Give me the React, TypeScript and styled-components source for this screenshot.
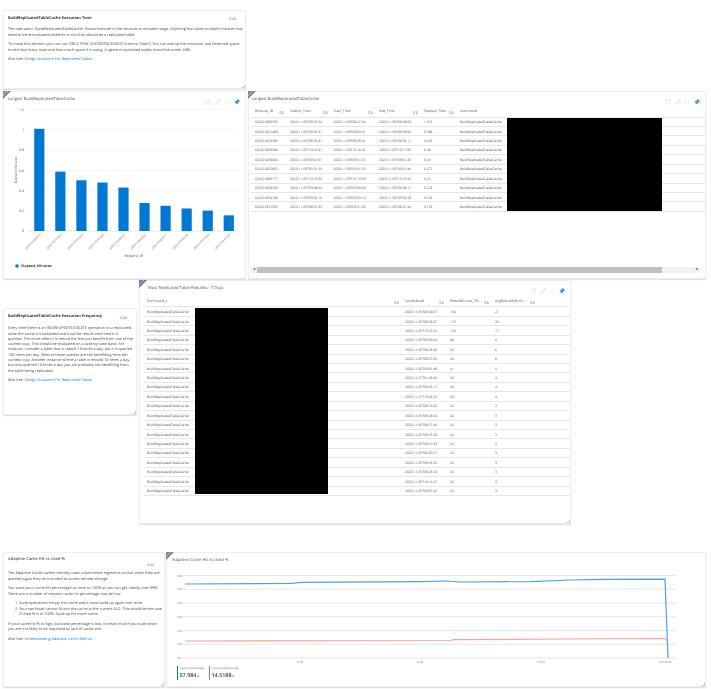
import React from 'react'
import styled, { createGlobalStyle } from 'styled-components'
import { Code, Pencil, Pin, RotateCw } from 'lucide-react'

const GlobalStyle = createGlobalStyle`
  html, body {
    margin: 0;
    background: #fff;
    font-family: "Open Sans", "Liberation Sans", sans-serif;
    text-rendering: geometricPrecision;
  }
`

const longestRows = [
  ['QID474380593', '2020-11-09T08:47:54', '2020-11-09T08:47:54', '2020-11-09T08:48:53', '1.012'],
  ['QID474291483', '2020-11-09T08:02:31', '2020-11-09T08:02:31', '2020-11-09T08:03:06', '0.588'],
  ['QID474253385', '2020-11-09T08:35:41', '2020-11-09T08:35:41', '2020-11-09T08:36:11', '0.502'],
  ['QID474390366', '2020-11-09T10:16:31', '2020-11-09T10:16:31', '2020-11-09T10:17:00', '0.48'],
  ['QID474258645', '2020-11-09T08:51:07', '2020-11-09T08:51:07', '2020-11-09T08:51:33', '0.43'],
  ['QID474352852', '2020-11-09T09:01:29', '2020-11-09T09:01:29', '2020-11-09T09:01:46', '0.277'],
  ['QID474389777', '2020-11-09T10:13:30', '2020-11-09T10:13:30', '2020-11-09T10:13:45', '0.25'],
  ['QID474358238', '2020-11-09T09:08:04', '2020-11-09T09:08:04', '2020-11-09T09:08:17', '0.223'],
  ['QID474354188', '2020-11-09T09:02:16', '2020-11-09T09:02:16', '2020-11-09T09:02:28', '0.202'],
  ['QID474331935', '2020-11-09T08:31:35', '2020-11-09T08:31:35', '2020-11-09T08:31:44', '0.155'],
]

const rebuildRows = [
  ['2020-11-09T08:32:07', '192', '27'],
  ['2020-11-09T08:32:07', '179', '25'],
  ['2020-11-09T10:16:32', '123', '17'],
  ['2020-11-09T08:30:54', '48', '6'],
  ['2020-11-09T08:28:48', '43', '6'],
  ['2020-11-09T08:27:05', '43', '6'],
  ['2020-11-09T08:01:48', '41', '5'],
  ['2020-11-07T01:49:00', '34', '4'],
  ['2020-11-09T08:55:17', '28', '4'],
  ['2020-11-07T10:54:53', '28', '4'],
  ['2020-11-09T08:13:05', '24', '3'],
  ['2020-11-09T08:23:04', '24', '3'],
  ['2020-11-09T08:17:45', '24', '3'],
  ['2020-11-09T08:15:28', '24', '3'],
  ['2020-11-09T08:10:33', '24', '3'],
  ['2020-11-09T08:20:57', '24', '3'],
  ['2020-11-09T08:18:59', '24', '3'],
  ['2020-11-09T08:23:43', '24', '3'],
  ['2020-11-09T18:16:27', '24', '3'],
  ['2020-11-09T08:07:42', '22', '3'],
]

const bars = [1.012, 0.588, 0.502, 0.48, 0.43, 0.277, 0.25, 0.223, 0.202, 0.155]

const longestCols = '35px 43.5px 45.5px 45px 36px 245.5px'
const rebuildCols = '258px 45px 45px 46px'

const PanelTools = () => (
  <Tools>
    <RotateCw size={6} strokeWidth={1.4} />
    <Pencil size={6} strokeWidth={1.6} />
    <Code size={6} strokeWidth={1.6} />
    <PinIcon size={6} strokeWidth={1.6} />
  </Tools>
)

const Corner = ({ tint = '#7f7f7f' }: { tint?: string }) => (
  <CornerMark viewBox="0 0 8 8">
    <polygon points="0,0 8,0 0,8" fill={tint} />
    <line x1="5" y1="0" x2="0" y2="5" stroke="#fff" strokeWidth="0.5" />
    <line x1="2.6" y1="0" x2="0" y2="2.6" stroke="#ddd" strokeWidth="0.4" />
  </CornerMark>
)

const Handle = () => (
  <ResizeMark viewBox="0 0 4 4">
    <path d="M0.5 3.6H3.6V0.5" fill="none" stroke="#b5b5b5" strokeWidth="0.8" />
  </ResizeMark>
)

const SortArrows = () => (
  <SortIcon viewBox="0 0 6 4">
    <path d="M1.5 4V0.5M0.5 1.5L1.5 0.5L2.5 1.5M4.5 0V3.5M3.5 2.5L4.5 3.5L5.5 2.5" fill="none" stroke="#555" strokeWidth="0.5" />
  </SortIcon>
)

const ElapsedChart = () => (
  <ChartSvg width="243" height="175" viewBox="3 104 243 175" $top={2.3}>
    {[0, 0.2, 0.4, 0.6, 0.8, 1, 1.2].map((v) => (
      <g key={v}>
        <line x1="27" x2="238" y1={231 - v * 101} y2={231 - v * 101} stroke={v === 0 ? '#dcdcdc' : '#f1f1f1'} strokeWidth="0.7" />
        <text x="23" y={232.2 - v * 101} fontSize="3.6" fill="#666" textAnchor="end">{v}</text>
      </g>
    ))}
    {bars.map((v, i) => (
      <rect key={i} x={33.2 + i * 21.05} y={231 - v * 101} width="10.2" height={v * 101} fill="#0078d4" />
    ))}
    {longestRows.map((r, i) => (
      <text key={r[0]} fontSize="3" fill="#777" textAnchor="end" transform={`translate(${40 + i * 21.05} 235) rotate(-45)`}>
        {r[0]}
      </text>
    ))}
    <text x="133" y="257" fontSize="3.6" fill="#555" textAnchor="middle">Request_ID</text>
    <text fontSize="3.4" fill="#555" textAnchor="middle" transform="translate(16 170) rotate(-90)">Elapsed_Minutes</text>
    <circle cx="16" cy="266" r="1.8" fill="#0078d4" />
    <text x="20" y="267.3" fontSize="3.7" fontWeight="700" fill="#444">Elapsed_Minutes</text>
  </ChartSvg>
)

const CacheChart = () => (
  <ChartSvg width="540" height="103" viewBox="166 563 540 103">
    {[0, 10, 20, 30, 40, 50, 60].map((v) => (
      <g key={v}>
        <line x1="182" x2="675" y1={658 - v * 1.375} y2={658 - v * 1.375} stroke="#e6e6e6" strokeWidth="1" />
        <text x="176" y={659 - v * 1.375} fontSize="2.9" fill="#888">{v}%</text>
      </g>
    ))}
    <polyline
      points="184,584 290,583.4 300,582.4 420,581.6 445,581 460,582 530,581.6 570,580 600,579.3 664,579.2 667,658"
      fill="none"
      stroke="#4fa2e2"
      strokeWidth="1.2"
    />
    <polyline
      points="184,641 450,640.5 452,639.6 560,639 664,638.5 665.5,640"
      fill="none"
      stroke="#f4a493"
      strokeWidth="1.2"
    />
    <text x="299" y="663" fontSize="2.8" fill="#888" textAnchor="middle">5 AM</text>
    <text x="419" y="663" fontSize="2.8" fill="#888" textAnchor="middle">9 AM</text>
    <text x="540" y="663" fontSize="2.8" fill="#888" textAnchor="middle">10 AM</text>
    <text x="664" y="663" fontSize="2.8" fill="#888" textAnchor="middle">UTC 06:00</text>
  </ChartSvg>
)

export default function App() {
  return (
    <Page>
      <GlobalStyle />
      <TopRow>
        <LeftColumn>
          <NotePanel $width={243} $height={79}>
            <NoteHeader>
              <NoteTitle>BuildReplicatedTableCache Execution Time</NoteTitle>
              <EditLink $drop={1}>Edit</EditLink>
            </NoteHeader>
            <Para>
              The operation: 'BuildReplicatedTableCache' Should execute in the seconds to minutes range. Anything that
              takes multiple minutes may
              <br />
              need to be re-evaluated whether or not that should be a replicated table.
            </Para>
            <Para>
              To make this decision you can run: DBCC PDW_SHOWSPACEUSED('Schema.Table'); You can add up the rowcount and
              Reserved space
              <br />
              to see how many rows and how much space it is using. In general replicated tables should be under 2GB.
            </Para>
            <Para>
              Also See: <DocLink>Design Guidance For Replicated Tables</DocLink>
            </Para>
            <Handle />
          </NotePanel>
          <ChartPanel $width={243} $height={188}>
            <Corner />
            <PanelTitle $indent={3.7}>Longest BuildReplicatedTableCache</PanelTitle>
            <PanelTools />
            <ElapsedChart />
          </ChartPanel>
        </LeftColumn>
        <TablePanel $width={458} $height={188} $inset={2}>
          <Corner />
          <PanelTitle $indent={0.7}>Longest BuildReplicatedTableCache</PanelTitle>
          <PanelTools />
          <HeaderRow $cols={longestCols} $gap={5.9}>
            {['Request_ID', 'Submit_Time', 'Start_Time', 'End_Time', 'Elapsed_Time'].map((h) => (
              <HeaderCell key={h}>
                {h}
                <SortArrows />
              </HeaderCell>
            ))}
            <HeaderCell>Command</HeaderCell>
          </HeaderRow>
          <RowStack>
            {longestRows.map((r) => (
              <Row key={r[0]} $cols={longestCols}>
                {r.map((c, i) => (
                  <Cell key={i}>{c}</Cell>
                ))}
                <Cell>BuildReplicatedTableCache</Cell>
              </Row>
            ))}
            <Redaction $left={255.7} $top={0.7} $width={155} $height={93} />
          </RowStack>
          <ScrollTrack>
            <ScrollArrow>◂</ScrollArrow>
            <ScrollThumb />
            <ScrollArrow>▸</ScrollArrow>
          </ScrollTrack>
        </TablePanel>
      </TopRow>

      <MiddleRow>
        <NotePanel $width={134} $height={107} $top={28}>
          <NoteHeader>
            <NoteTitle>BuildReplicatedTableCache Execution Frequency</NoteTitle>
            <EditLink $drop={2}>Edit</EditLink>
          </NoteHeader>
          <Para>
            Every time there is an INSER/UPDATE/DELETE operation to a replicated
            <br />
            table the cache is invalidated and it will be rebuilt next time it is
            <br />
            queried. The more often it is rebuilt the less you benefit from use of the
            <br />
            cached copy. This should be evaluated on a case-by-case basis. For
            <br />
            instance, consider a table that is rebuilt 10 times a day, but it is queried
            <br />
            100 times per day. Most of those queries are still benefiting from teh
            <br />
            cached copy. Another instance where a table is rebuild 10 times a day,
            <br />
            but only queried 10 times a day you are probably not benefiting from
            <br />
            the table being replicated.
          </Para>
          <Para>
            Also See: <DocLink>Design Guidance For Replicated Tables</DocLink>
          </Para>
          <Handle />
        </NotePanel>
        <TablePanel $width={432} $height={244} $inset={3}>
          <Corner tint="#84689a" />
          <PanelTitle $indent={5}>Most Replicated Table Rebuilds - 7 Days</PanelTitle>
          <PanelTools />
          <HeaderRow $cols={rebuildCols}>
            {['Command_s', 'LastRebuild', 'RebuildCount_7D...', 'AvgRebuildsPerD...'].map((h) => (
              <HeaderCell key={h}>
                {h}
                <SortArrows />
              </HeaderCell>
            ))}
          </HeaderRow>
          <RowStack>
            {rebuildRows.map((r, n) => (
              <Row key={n} $cols={rebuildCols}>
                <Cell>BuildReplicatedTableCache</Cell>
                {r.map((c, i) => (
                  <Cell key={i}>{c}</Cell>
                ))}
              </Row>
            ))}
            <Redaction $left={52} $top={0.5} $width={132.5} $height={186} />
          </RowStack>
          <Handle />
        </TablePanel>
      </MiddleRow>

      <BottomRow>
        <CacheNote $width={162} $height={135}>
          <PlainTitle>Adaptive Cache Hit vs Used %</PlainTitle>
          <EditRow>
            <EditLink>Edit</EditLink>
          </EditRow>
          <Para>
            The Adaptive Cache caches recently used columnstore segments so that when they are
            <br />
            queried again they do not need to access remote storage.
          </Para>
          <Para>
            You want your Cache Hit percentage as close to 100% as you can get. Ideally over 99%.
            <br />
            There are a number of reasons cache hit percentage may be low.
          </Para>
          <Steps>
            <li>Scale operations empty the cache and it must build up again over time</li>
            <li>
              Your workload cannot fit into the cache at the current SLO. This would be the case
              <br />
              if Used % is at 100%. Scale up for more cache.
            </li>
          </Steps>
          <Para>
            If your cache hit % is high, but used percentage is low, it means that if you scale down
            <br />
            you are not likely to be impacted by lack of cache size.
          </Para>
          <Para>
            Also See: <DocLink>Understanding Adaptive Cache Metrics</DocLink>
          </Para>
          <Handle />
        </CacheNote>
        <ChartPanel $width={540} $height={135}>
          <Corner />
          <PanelTitle $indent={5}>Adaptive Cache Hit vs Used %</PanelTitle>
          <CacheChart />
          <Legend>
            <LegendItem $color="#0078d4">
              <LegendLabel>Cache hit percentag...</LegendLabel>
              <LegendValue>
                57.984<small>%</small>
              </LegendValue>
            </LegendItem>
            <LegendItem $color="#ee6a55">
              <LegendLabel>Cache used percentag...</LegendLabel>
              <LegendValue>
                14.5188<small>%</small>
              </LegendValue>
            </LegendItem>
          </Legend>
          <Handle />
        </ChartPanel>
      </BottomRow>
    </Page>
  )
}

const Page = styled.div`
  width: 711px;
  height: 689px;
  padding: 10px 0 0 3px;
  box-sizing: border-box;
  overflow: hidden;
  color: #444;
  filter: blur(0.25px);
`

const TopRow = styled.div`
  display: flex;
  gap: 2px;
  align-items: flex-end;
`

const LeftColumn = styled.div`
  display: flex;
  flex-direction: column;
  gap: 2px;
`

const MiddleRow = styled.div`
  display: flex;
  gap: 2px;
  align-items: flex-start;
  margin-top: 1px;
`

const BottomRow = styled.div`
  display: flex;
  gap: 1px;
  margin-top: 28px;
`

const Panel = styled.div<{ $width: number; $height: number; $top?: number }>`
  position: relative;
  box-sizing: border-box;
  flex: none;
  width: ${(p) => p.$width}px;
  height: ${(p) => p.$height}px;
  margin-top: ${(p) => p.$top ?? 0}px;
  background: #fff;
  border: 1px solid #eeeeee;
  box-shadow: 0 1px 1px rgba(0, 0, 0, 0.12);
`

const NotePanel = styled(Panel)`
  padding: 5.3px 4px 0;
  font-size: 3.75px;
  line-height: 5.3px;
  color: #4a4a4a;
  white-space: nowrap;
`

const CacheNote = styled(NotePanel)`
  padding-top: 4px;
`

const NoteHeader = styled.div`
  display: flex;
  justify-content: space-between;
  align-items: flex-start;
  margin-bottom: 4.7px;
  padding-right: 5px;
`

const NoteTitle = styled.div`
  font-weight: 700;
  font-size: 3.9px;
  color: #333;
`

const PlainTitle = styled.div`
  font-size: 4px;
  font-weight: 600;
  color: #555;
`

const EditRow = styled.div`
  display: flex;
  justify-content: flex-end;
  padding-right: 6px;
  margin: 0.6px 0 3.2px;
`

const EditLink = styled.span<{ $drop?: number }>`
  color: #3a8fd8;
  margin-top: ${(p) => p.$drop ?? 0}px;
`

const Para = styled.p`
  margin: 0 0 4.4px;
`

const DocLink = styled.span`
  color: #1b7fd1;
`

const Steps = styled.ol`
  margin: 0 0 4.4px;
  padding-left: 11px;
`

const ChartPanel = styled(Panel)`
  padding-top: 3.7px;
`

const TablePanel = styled(Panel)<{ $inset: number }>`
  display: flex;
  flex-direction: column;
  padding: 3.7px 0 0 ${(p) => p.$inset}px;
`

const PanelTitle = styled.div<{ $indent: number }>`
  font-size: 4.1px;
  line-height: 6px;
  padding: 1px 0 0 ${(p) => p.$indent}px;
  margin-bottom: -1px;
  color: #555;
`

const Tools = styled.div`
  position: absolute;
  top: 7px;
  right: 5px;
  display: flex;
  gap: 3.6px;
  color: #c4c4c4;
`

const PinIcon = styled(Pin)`
  color: #1e88d8;
  fill: #1e88d8;
  transform: rotate(45deg);
`

const CornerMark = styled.svg`
  position: absolute;
  top: -1px;
  left: -1px;
  width: 8px;
  height: 8px;
`

const ResizeMark = styled.svg`
  position: absolute;
  right: 0.5px;
  bottom: 0.5px;
  width: 4px;
  height: 4px;
`

const ChartSvg = styled.svg<{ $top?: number }>`
  display: block;
  margin-top: ${(p) => p.$top ?? 0}px;
  font-family: "Open Sans", "Liberation Sans", sans-serif;
`

const Row = styled.div<{ $cols: string; $gap?: number }>`
  display: grid;
  grid-template-columns: ${(p) => p.$cols};
  height: 9.43px;
  box-sizing: border-box;
  padding-top: 1.6px;
  border-bottom: 1px solid #e6e6e6;
  align-items: center;
`

const HeaderRow = styled(Row)`
  height: 10px;
  margin-top: ${(p) => p.$gap ?? 6.8}px;
`

const RowStack = styled.div`
  position: relative;
`

const Cell = styled.div`
  padding-left: 4px;
  font-size: 3.3px;
  line-height: 6.8px;
  white-space: nowrap;
  overflow: hidden;
  color: #555;
`

const HeaderCell = styled(Cell)`
  display: flex;
  justify-content: space-between;
  align-items: center;
  padding-right: 2px;
  font-size: 3.5px;
`

const SortIcon = styled.svg`
  width: 5px;
  height: 3.4px;
  flex: none;
`

const Redaction = styled.div<{ $left: number; $top: number; $width: number; $height: number }>`
  position: absolute;
  left: ${(p) => p.$left}px;
  top: ${(p) => p.$top}px;
  width: ${(p) => p.$width}px;
  height: ${(p) => p.$height}px;
  background: #000;
`

const ScrollTrack = styled.div`
  display: flex;
  align-items: center;
  height: 6px;
  margin: auto 5px 5px 0;
  background: #f1f1f1;
`

const ScrollArrow = styled.span`
  width: 6px;
  flex: none;
  text-align: center;
  font-size: 4px;
  line-height: 6px;
  color: #444;
`

const ScrollThumb = styled.div`
  width: 405px;
  height: 6px;
  margin-right: auto;
  background: #c1c1c1;
`

const Legend = styled.div`
  display: flex;
  gap: 4px;
  padding: 0 0 0 10px;
`

const LegendItem = styled.div<{ $color: string }>`
  box-sizing: border-box;
  width: 28px;
  height: 14px;
  padding-left: 1.5px;
  border-left: 1.5px solid ${(p) => p.$color};
`

const LegendLabel = styled.div`
  font-size: 2.6px;
  line-height: 5px;
  white-space: nowrap;
  color: #666;
`

const LegendValue = styled.div`
  font-size: 5.4px;
  line-height: 9px;
  font-weight: 600;
  color: #333;

  small {
    font-size: 2.8px;
    font-weight: 400;
    margin-left: 0.5px;
  }
`
